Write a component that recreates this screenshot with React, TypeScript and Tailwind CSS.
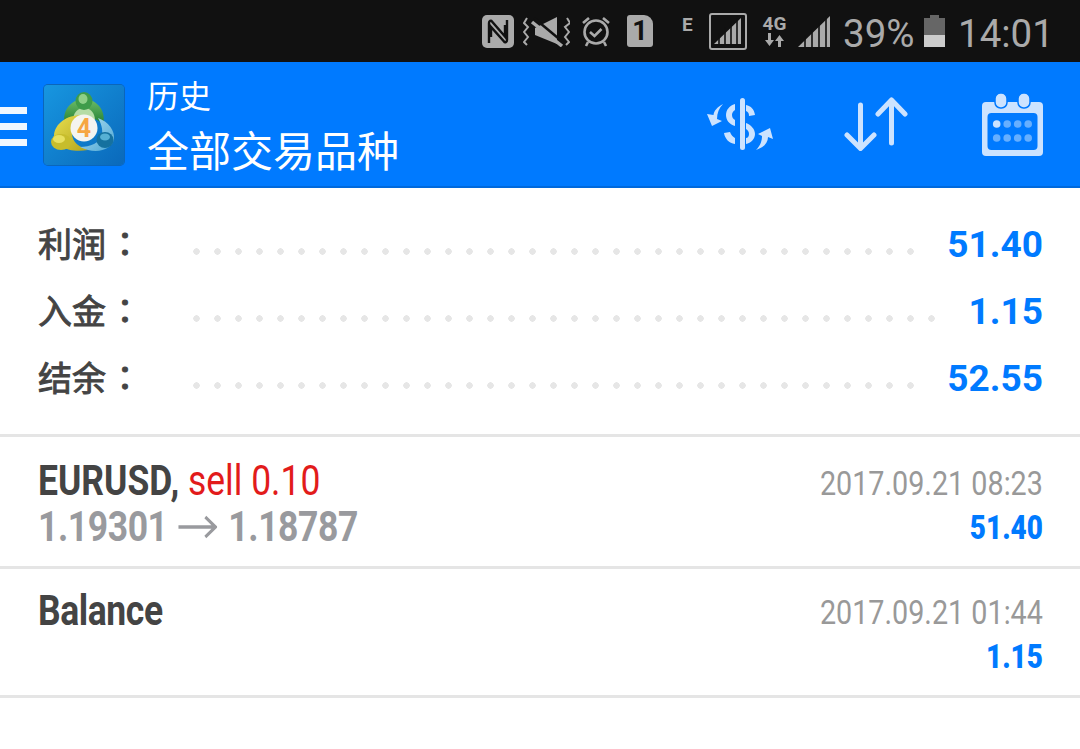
const CJK = "font-['Noto_Sans_CJK_SC',sans-serif]"

const summary = [
  { label: '利润', value: '51.40' },
  { label: '入金', value: '1.15' },
  { label: '结余', value: '52.55' },
]

function Nfc() {
  return (
    <svg width="32" height="33" viewBox="0 0 32 33" fill="none">
      <rect x="0" y="0" width="32" height="33" rx="5" fill="#aaa" />
      <path d="M7 28V8c0-2 2-3 3-1.500l13 15V10" stroke="#111" strokeWidth="2.400" />
      <path d="M25 5v20c0 2-2 3-3 1.500L9 12v10" stroke="#111" strokeWidth="2.400" />
    </svg>
  )
}

function MuteVibrate() {
  return (
    <svg width="47" height="32" viewBox="0 0 47 32" fill="none">
      <path d="M4 3l-3 5 4 4-4 5 4 5-4 5 3 3M44 3l3 5-5 4 4 5-4 5 4 5-3 3" stroke="#aaa" strokeWidth="2" />
      <path d="M12 13l22-11v27l-22-9z" fill="#aaa" />
      <path d="M11 3l30 25" stroke="#111" strokeWidth="2.500" />
      <path d="M9 7l30 24" stroke="#aaa" strokeWidth="3.500" />
    </svg>
  )
}

function Alarm() {
  return (
    <svg width="30" height="33" viewBox="0 0 30 33" fill="none" stroke="#aaa">
      <circle cx="15" cy="17" r="11.500" strokeWidth="2.600" />
      <path d="M2 8l6-5M28 8l-6-5" strokeWidth="2.600" />
      <path d="M9 17l4.500 4 7-7" strokeWidth="2.600" />
      <path d="M7 27l-2 4M23 27l2 4" strokeWidth="2.600" />
    </svg>
  )
}

function Sim() {
  return (
    <div className="flex h-[32px] w-[26px] items-center justify-center rounded-[3px] rounded-tr-[9px] bg-[#aaa] font-['Roboto'] text-[27px] leading-none font-bold text-[#111]">
      1
    </div>
  )
}

function SignalBox() {
  return (
    <svg width="38" height="37" viewBox="0 0 38 37" fill="none">
      <rect x="1" y="1" width="36" height="35" rx="2" stroke="#aaa" strokeWidth="2" />
      <path d="M5 31l27-26v26z" fill="#aaa" />
      <path d="M10 32V20M16 32V14M22 32V8M28 32V2" stroke="#111" strokeWidth="1.600" />
    </svg>
  )
}

function Net4G() {
  return (
    <div className="flex h-[33px] w-[27px] flex-col items-center font-['Roboto'] text-[#aaa]">
      <span className="text-[19px] leading-[18px] font-bold">4G</span>
      <svg width="24" height="15" viewBox="0 0 24 15" fill="#aaa">
        <path d="M5 0h3v7h3l-4.500 6-4.500-6h3zM15 8h-3l4.500-6 4.500 6h-3v6h-3z" />
      </svg>
    </div>
  )
}

function Signal() {
  return (
    <svg width="32" height="33" viewBox="0 0 32 33" fill="none">
      <path d="M0 32L32 1v31z" fill="#aaa" />
      <path d="M7 33V20M14 33V14M21 33V8M28 33V0" stroke="#111" strokeWidth="1.600" />
    </svg>
  )
}

function Battery() {
  return (
    <svg width="21" height="33" viewBox="0 0 21 33">
      <path d="M6 0h9v3h6v19H0V3h6z" fill="#666" />
      <rect x="0" y="20" width="21" height="12" fill="#ccc" />
    </svg>
  )
}

function StatusBar() {
  return (
    <div className="flex h-[62px] items-center bg-[#111111] pl-[482px] font-['Roboto'] text-[38.500px] leading-none text-[#aaaaaa]">
      <Nfc />
      <div className="ml-[9px]"><MuteVibrate /></div>
      <div className="ml-[11px]"><Alarm /></div>
      <div className="ml-[16px]"><Sim /></div>
      <span className="mb-[14px] ml-[29px] w-[11px] text-[19px] font-bold">E</span>
      <div className="ml-[16px]"><SignalBox /></div>
      <div className="ml-[14px]"><Net4G /></div>
      <div className="ml-[10px]"><Signal /></div>
      <span className="mt-[6px] ml-[13px] w-[72px] whitespace-nowrap">39%</span>
      <div className="ml-[9px]"><Battery /></div>
      <span className="mt-[6px] ml-[13px] whitespace-nowrap">14:01</span>
    </div>
  )
}

function Logo() {
  return (
    <div className="relative mt-[2px] ml-[17px] h-[80px] w-[80px] rounded-[4px] bg-[linear-gradient(135deg,#1796e0,#0a69bb)] shadow-[0_0_0_1px_#0a66bb]">
      <svg className="absolute inset-0" width="80" height="80" viewBox="0 0 80 80">
        <defs>
          <linearGradient id="mtGreen" x1="0" y1="0" x2="0" y2="1">
            <stop offset="0" stopColor="#6dbd68" />
            <stop offset="1" stopColor="#1f7d30" />
          </linearGradient>
          <linearGradient id="mtYellow" x1="0" y1="0" x2="1" y2="1">
            <stop offset="0" stopColor="#e8df50" />
            <stop offset="1" stopColor="#b3a51c" />
          </linearGradient>
          <linearGradient id="mtBlue" x1="0" y1="0" x2="1" y2="1">
            <stop offset="0" stopColor="#b5e0f2" />
            <stop offset="1" stopColor="#4aa6d4" />
          </linearGradient>
        </defs>
        {/* green figure */}
        <path d="M21 40C17 24 29 14 40 14s23 10 19 26c-4-5-10-8-19-8s-15 3-19 8z" fill="url(#mtGreen)" />
        <path d="M29 36c0-9 5-13 11-13s11 4 11 13z" fill="#b5dca6" />
        <ellipse cx="40" cy="16" rx="8.500" ry="9" fill="#3f9c4a" />
        <ellipse cx="39" cy="14" rx="4.500" ry="5" fill="#8ed087" />
        {/* yellow figure */}
        <path d="M40 30C24 29 11 38 10 50c0 12 16 18 34 15-8-3-16-7-16-17 0-6 6-12 12-18z" fill="url(#mtYellow)" />
        <ellipse cx="17" cy="57" rx="10" ry="8" fill="#c7bd2c" />
        <ellipse cx="15" cy="54" rx="6" ry="4" fill="#e8e05f" />
        {/* blue figure */}
        <path d="M54 33c11 4 17 13 16 21-2 11-18 16-34 8 10 0 20-4 22-12 1-6-1-12-4-17z" fill="url(#mtBlue)" />
        <ellipse cx="61" cy="55" rx="8.500" ry="8" fill="#15719f" />
        <ellipse cx="61" cy="52" rx="5" ry="3.500" fill="#56b0d4" />
        <circle cx="40" cy="43" r="13.500" fill="#f4f4f0" />
        <text x="40" y="52" textAnchor="middle" fontSize="25" fontWeight="700" fontFamily="Roboto" fill="#f6a641">4</text>
      </svg>
    </div>
  )
}

function SwapDollar() {
  return (
    <svg width="68" height="53" viewBox="0 0 68 53" fill="#cce3ff">
      <rect x="34" y="0" width="5" height="52" rx="2.500" />
      <path d="M29 6C23 8 20 12 20 17c0 5 3 9 9 11v-6c-2-1-3-3-3-5s1-4 3-5z" />
      <path d="M40 7c5 1 8 4 9 10l-6 1c0-3-1-4-3-5z" />
      <path d="M40 25c5 2 9 6 9 11 0 5-4 9-9 10v-6c2 0 3-2 3-4s-1-4-3-5z" />
      <path d="M18 35l6-1c1 3 3 5 5 6v6c-6-1-10-5-11-11z" />
      <path d="M17 6c-6 3-9 7-9.500 11L1 16l5 12 10-5-5-2c0-6 2-11 6-15z" />
      <path d="M50 52c5-5 6-10 6-14l-4-2 12-6 3 11-5-2c0 6-5 11-12 13z" />
    </svg>
  )
}

function SortArrows() {
  return (
    <svg width="66" height="54" viewBox="0 0 66 54" fill="none" stroke="#cce3ff" strokeWidth="5" strokeLinecap="round" strokeLinejoin="round">
      <path d="M17.500 8v43M4 38l13.500 13.500L31 38" />
      <path d="M48.500 46V3M35 17L48.500 3 62 17" />
    </svg>
  )
}

function CalendarIcon() {
  const dots = [0, 1, 2, 3, 4, 5, 6, 7]
  return (
    <svg width="61" height="63" viewBox="0 0 61 63">
      <path d="M4 9h53a4 4 0 0 1 4 4v46a4 4 0 0 1-4 4H4a4 4 0 0 1-4-4V13a4 4 0 0 1 4-4z" fill="#cce3ff" />
      <rect x="13" y="0" width="12" height="15" rx="5.500" fill="#cce3ff" stroke="#007aff" strokeWidth="1.500" />
      <rect x="36" y="0" width="12" height="15" rx="5.500" fill="#cce3ff" stroke="#007aff" strokeWidth="1.500" />
      <rect x="5.500" y="20" width="50" height="37" rx="4" fill="#007aff" />
      {dots.map((d) => (
        <circle key={d} cx={14.700 + (d % 4) * 10.500} cy={d < 4 ? 31 : 45} r="3.800" fill={d === 0 ? '#cce3ff' : '#66afff'} />
      ))}
    </svg>
  )
}

function Header() {
  return (
    <div className="flex h-[126px] items-center border-b-2 border-[#0069dc] bg-[#007aff] text-white">
      <div className="mt-[5px] flex w-[27px] flex-col gap-[9px]">
        <div className="h-[7px] bg-[#f0f7ff]" />
        <div className="h-[7px] bg-[#f0f7ff]" />
        <div className="h-[7px] bg-[#f0f7ff]" />
      </div>
      <Logo />
      <div className={`ml-[23px] flex flex-col ${CJK}`}>
        <span className="text-[32px] leading-[50px]">历史</span>
        <span className="text-[42px] leading-[60px]">全部交易品种</span>
      </div>
      <div className="ml-auto flex items-center pr-[37px]">
        <SwapDollar />
        <div className="ml-[69px]"><SortArrows /></div>
        <div className="ml-[73px]"><CalendarIcon /></div>
      </div>
    </div>
  )
}

function Summary() {
  return (
    <div className="flex h-[246px] flex-col pt-[23px] pr-[37px] pl-[38px]">
      {summary.map((s) => (
        <div key={s.label} className="flex h-[67px] items-center">
          <span className={`mb-[5px] flex w-[148px] shrink-0 text-[34px] text-[#444444] [-webkit-text-stroke:0.9px_#444444] ${CJK}`}>
            {s.label}
            <span className="ml-[2px] font-['Noto_Sans_CJK_TC',sans-serif] [-webkit-text-stroke:1px_#444444]">：</span>
          </span>
          <div className="mt-[14px] mr-[30px] h-[7px] flex-1 bg-[radial-gradient(circle,#e6e6e6_3px,transparent_3.5px)] bg-[length:21px_7px] bg-[position:left_center] bg-repeat-x" />
          <span className="font-['Roboto'] text-[37px] font-bold text-[#007aff]">{s.value}</span>
        </div>
      ))}
    </div>
  )
}

// Roboto Condensed is not installed, so the row text is Roboto squeezed horizontally
function Row({ children, date, value, h, leftPt, rightPt }: { children: React.ReactNode; date: string; value: string; h: string; leftPt: string; rightPt: string }) {
  return (
    <div className={`flex justify-between border-t-[3px] border-[#e5e5e5] pr-[37px] pl-[38px] font-['Roboto'] ${h}`}>
      <div className={`flex origin-left scale-x-[.845] flex-col whitespace-nowrap text-[42px] leading-[46px] ${leftPt}`}>
        {children}
      </div>
      <div className={`flex origin-right scale-x-[.845] flex-col items-end whitespace-nowrap ${rightPt}`}>
        <span className="text-[34px] leading-[44px] text-[#999999]">{date}</span>
        <span className="text-[33px] leading-[45px] font-black text-[#007aff]">{value}</span>
      </div>
    </div>
  )
}

export default function App() {
  return (
    <div className="flex h-[749px] flex-col overflow-hidden bg-white">
      <StatusBar />
      <Header />
      <Summary />
      <Row h="h-[132px]" leftPt="pt-[21px]" rightPt="pt-[24px]" date="2017.09.21 08:23" value="51.40">
        <div>
          <span className="font-bold text-[#444444]">EURUSD, </span>
          <span className="text-[#e21b1b]">sell 0.10</span>
        </div>
        <div className="flex items-center font-bold tracking-[-0.5px] text-[#999a9e]">
          1.19301
          <svg className="mx-[13px]" width="46" height="24" viewBox="0 0 46 24" fill="none" stroke="#999a9e" strokeWidth="3.500">
            <path d="M0 12h43M32 2l12 10-12 10" />
          </svg>
          1.18787
        </div>
      </Row>
      <Row h="h-[129px]" leftPt="pt-[19px]" rightPt="pt-[21px]" date="2017.09.21 01:44" value="1.15">
        <div className="font-bold tracking-[-0.5px] text-[#444444]">Balance</div>
      </Row>
      <div className="border-t-[3px] border-[#e5e5e5]" />
    </div>
  )
}
